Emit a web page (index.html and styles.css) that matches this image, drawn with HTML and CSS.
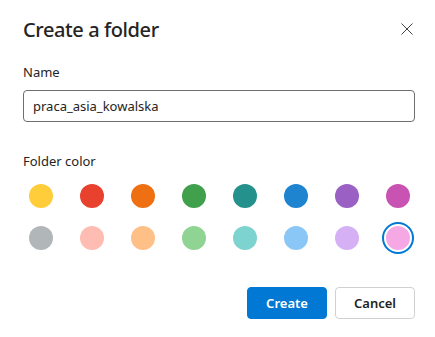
FILE: index.html
```html
<!DOCTYPE html>
<html lang="en">
<head>
  <meta charset="UTF-8" />
  <title>Create a folder</title>
  <link rel="stylesheet" href="styles.css">
</head>
<body>
  <div class="dialog">
    <div class="dialog-header">
      <h2 class="dialog-title">Create a folder</h2>
      <button class="close-btn" aria-label="Close">
        <svg width="12" height="12" viewBox="0 0 12 12">
          <path d="M0.5 0.5 L11.5 11.5 M11.5 0.5 L0.5 11.5" stroke="#424242" stroke-width="1" fill="none" />
        </svg>
      </button>
    </div>

    <label class="field-label" for="folderName">Name</label>
    <input class="text-input" type="text" id="folderName" value="praca_asia_kowalska">

    <div class="field-label color-label">Folder color</div>
    <div class="swatches">
      <button class="swatch"><span class="dot" style="background:#ffcc3a"></span></button>
      <button class="swatch"><span class="dot" style="background:#e8412e"></span></button>
      <button class="swatch"><span class="dot" style="background:#ef7013"></span></button>
      <button class="swatch"><span class="dot" style="background:#40a04c"></span></button>
      <button class="swatch"><span class="dot" style="background:#24918c"></span></button>
      <button class="swatch"><span class="dot" style="background:#1e84d0"></span></button>
      <button class="swatch"><span class="dot" style="background:#9a60c4"></span></button>
      <button class="swatch"><span class="dot" style="background:#c953b2"></span></button>
      <button class="swatch"><span class="dot" style="background:#b1b6b9"></span></button>
      <button class="swatch"><span class="dot" style="background:#ffbcb3"></span></button>
      <button class="swatch"><span class="dot" style="background:#ffc088"></span></button>
      <button class="swatch"><span class="dot" style="background:#8fd493"></span></button>
      <button class="swatch"><span class="dot" style="background:#7dd3cf"></span></button>
      <button class="swatch"><span class="dot" style="background:#8ac7f7"></span></button>
      <button class="swatch"><span class="dot" style="background:#d5b0f5"></span></button>
      <button class="swatch selected"><span class="dot" style="background:#f6a8e4"></span></button>
    </div>

    <div class="actions">
      <button class="btn primary">Create</button>
      <button class="btn">Cancel</button>
    </div>
  </div>
</body>
</html>
```

FILE: styles.css
```css
body {
  margin: 0;
  background: #ffffff;
  font-family: 'Noto Sans', 'Open Sans', sans-serif;
  color: #242424;
}

.dialog {
  padding: 16px 20px 0 23px;
}

.dialog-header {
  display: flex;
  justify-content: space-between;
  align-items: flex-start;
  height: 28px;
}

.dialog-title {
  margin: 0;
  font-size: 20px;
  font-weight: 500;
  line-height: 28px;
  letter-spacing: -0.4px;
}

.close-btn {
  border: none;
  background: none;
  padding: 0;
  width: 12px;
  height: 12px;
  margin: 7px 2px 0 0;
  display: flex;
  cursor: pointer;
}

.field-label {
  display: block;
  font-size: 13px;
  line-height: 20px;
  margin-top: 18px;
}

.text-input {
  box-sizing: border-box;
  display: block;
  width: 392px;
  height: 32px;
  margin-top: 8px;
  padding: 0 9px;
  border: 1px solid #6e6e6e;
  border-radius: 4px;
  font-family: inherit;
  font-size: 13px;
  color: #242424;
  outline: none;
}

.color-label {
  margin-top: 29px;
}

.swatches {
  display: grid;
  grid-template-columns: repeat(8, 32px);
  column-gap: 19px;
  row-gap: 10px;
  margin: 9px 0 0 2px;
}

.swatch {
  width: 32px;
  height: 32px;
  padding: 0;
  border: 2px solid transparent;
  border-radius: 50%;
  background: none;
  display: flex;
  align-items: center;
  justify-content: center;
  cursor: pointer;
}

.swatch.selected {
  border-color: #0078d4;
}

.dot {
  width: 24px;
  height: 24px;
  border-radius: 50%;
}

.actions {
  display: flex;
  justify-content: flex-end;
  gap: 8px;
  margin-top: 33px;
}

.btn {
  width: 80px;
  height: 32px;
  border: 1px solid #d1d1d1;
  border-radius: 4px;
  background: #ffffff;
  font-family: inherit;
  font-size: 13px;
  font-weight: 600;
  color: #242424;
  cursor: pointer;
}

.btn.primary {
  background: #0078d4;
  border-color: #0078d4;
  color: #ffffff;
}
```
